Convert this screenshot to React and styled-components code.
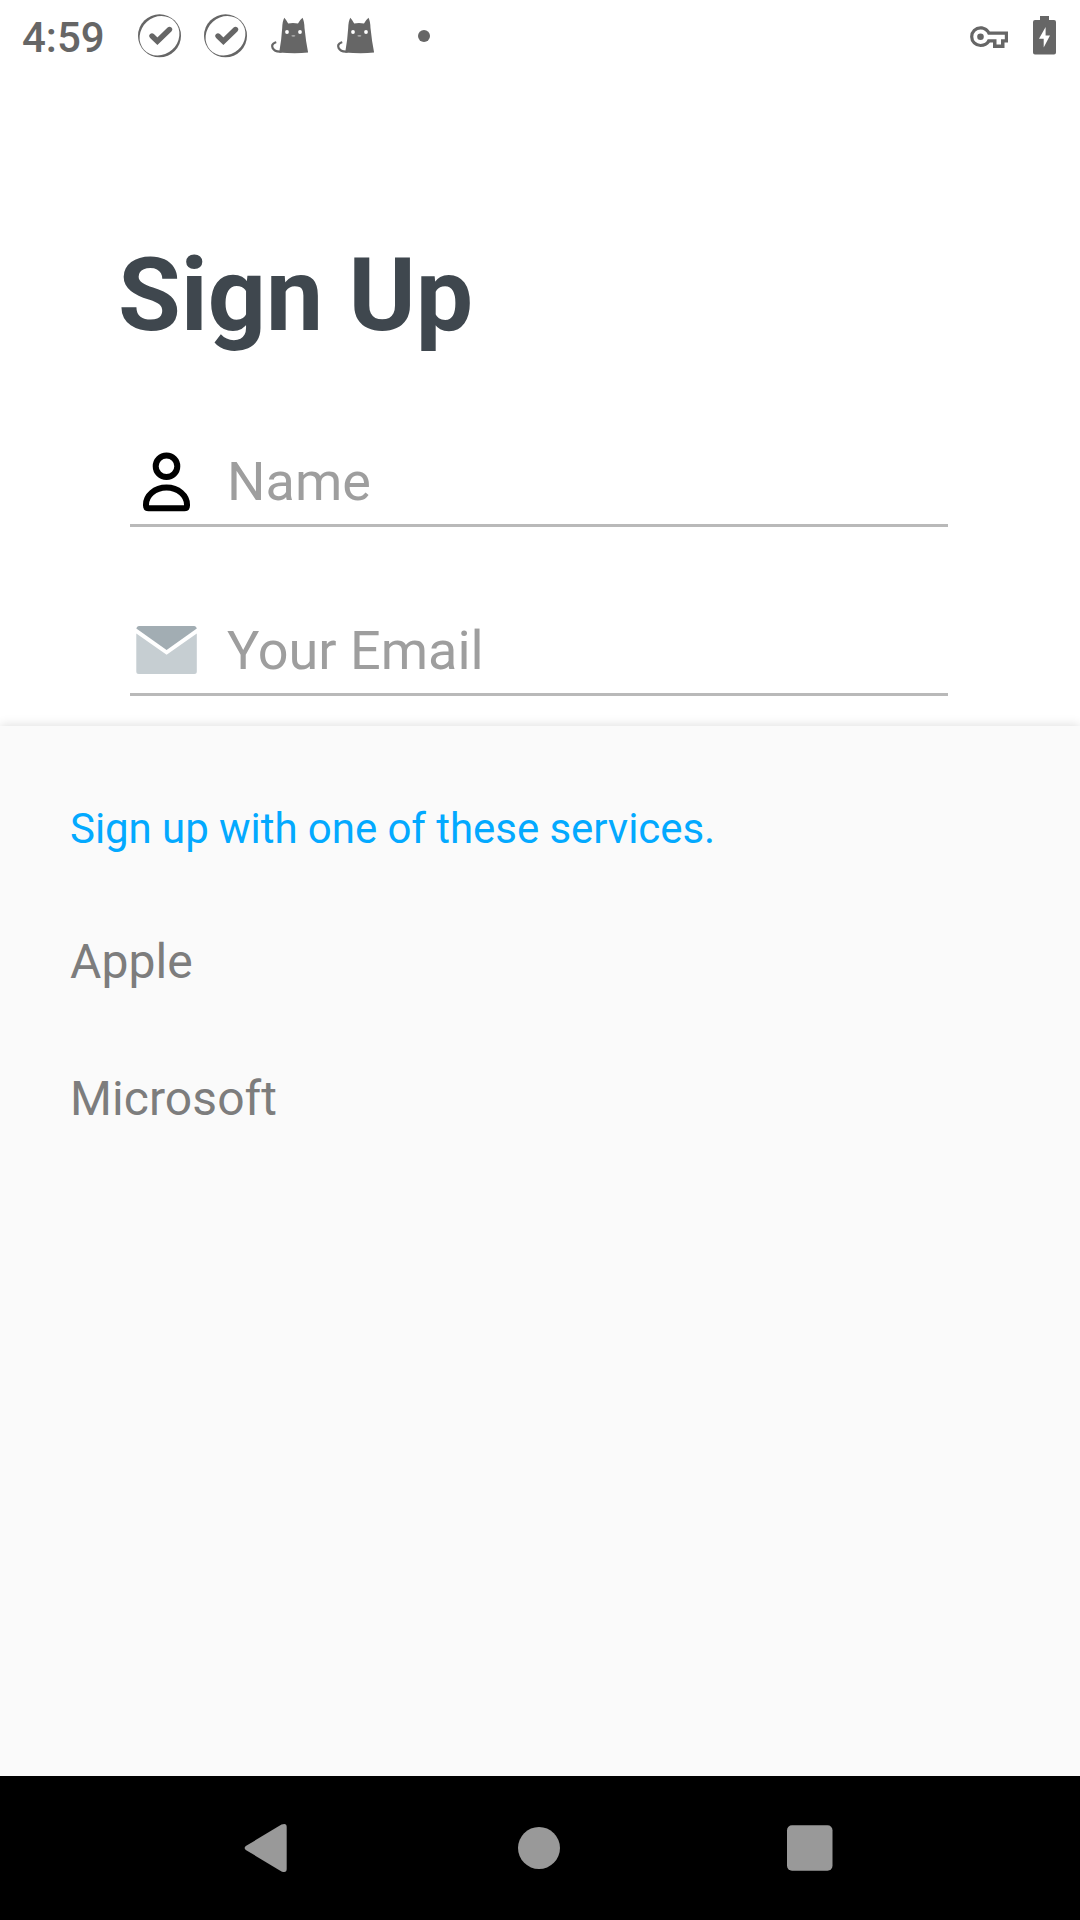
import React from "react";
import styled, { createGlobalStyle } from "styled-components";

const GlobalStyle = createGlobalStyle`
  *, *::before, *::after { box-sizing: border-box; }
  body { margin: 0; background: #fff; font-family: Roboto, "Liberation Sans", sans-serif; }
`;

const Screen = styled.div`
  width: 1080px;
  height: 1920px;
  display: flex;
  flex-direction: column;
  overflow: hidden;
  background: #fff;
`;

const StatusBar = styled.header`
  flex: none;
  height: 72px;
  padding: 0 24px 0 22px;
  display: flex;
  align-items: center;
  justify-content: space-between;
  color: #666;
`;

const StatusGroup = styled.div`
  display: flex;
  align-items: center;
  gap: ${(p) => p.$gap || 0}px;
`;

const Clock = styled.span`
  width: 104px;
  font-size: 42px;
  font-weight: 500;
  line-height: 48px;
  padding-top: 3px;
`;

const Icon = styled.svg`
  display: block;
  flex: none;
  width: ${(p) => p.$w}px;
  height: ${(p) => p.$h}px;
`;

const Form = styled.main`
  flex: none;
  height: 654px;
  padding: 163px 132px 0 118px;
  display: flex;
  flex-direction: column;
`;

const Title = styled.h1`
  margin: 0;
  color: #3f474e;
  font-size: 102px;
  font-weight: 700;
  line-height: 120px;
`;

const Fields = styled.div`
  display: flex;
  flex-direction: column;
  gap: 82px;
  padding: 85px 0 0 12px;
`;

const Field = styled.label`
  height: 87px;
  display: flex;
  align-items: center;
  gap: 26px;
  padding-left: 5px;
  border-bottom: 3px solid #b9b9b9;
`;

const Input = styled.input`
  flex: 1;
  min-width: 0;
  height: 64px;
  padding: 0;
  border: 0;
  outline: 0;
  background: transparent;
  font: 400 54px/64px Roboto, "Liberation Sans", sans-serif;
  &::placeholder { color: #9e9e9e; opacity: 1; }
`;

const Sheet = styled.section`
  flex: 1;
  padding: 72px 70px 0;
  background: #fafafa;
  box-shadow: 0 -1px 10px rgba(0, 0, 0, 0.13);
`;

const SheetTitle = styled.h2`
  margin: 0 0 33px;
  color: #03a9ff;
  font-size: 42px;
  font-weight: 400;
  line-height: 62px;
  letter-spacing: -0.055px;
`;

const ServiceList = styled.ul`
  margin: 0;
  padding: 0;
  list-style: none;
`;

const Service = styled.li`
  height: 137px;
  display: flex;
  align-items: center;
  color: #7d7d7d;
  font-size: 48px;
  line-height: 56px;
  letter-spacing: 0.08px;
`;

const NavBar = styled.nav`
  flex: none;
  height: 144px;
  padding: 0 135px;
  display: flex;
  background: #000;
`;

const NavButton = styled.button`
  flex: 1;
  padding: 0;
  border: 0;
  background: transparent;
  display: flex;
  align-items: center;
  justify-content: center;
`;

const CheckBadge = () => (
  <Icon $w={66} $h={72} viewBox="0 0 66 72" fill="none">
    <circle cx="33.500" cy="35.800" r="21.500" fill="#666" />
    <ellipse cx="33.500" cy="35.800" rx="20.800" ry="18.800" transform="rotate(-42 33.500 35.800)" fill="#fff" />
    <path d="M26 36L31.400 41.300L43.500 29.500" stroke="#666" strokeWidth="5.400" strokeLinecap="round" strokeLinejoin="miter" />
  </Icon>
);

const Cat = () => (
  <Icon $w={66} $h={72} viewBox="-0.8 0 66 72" fill="none">
    <path
      fill="#666"
      d="M25.500 17.700Q27.600 20 29.400 23.400Q34 22.800 39.200 23.400Q41 20 43.700 17.700Q45.500 21 45.700 28Q47 41 49.300 52.500Q36 54 20.400 52.400Q22.700 40 23.400 28Q23.600 21 25.500 17.700z"
    />
    <path d="M22 51.500C13.500 52 10.500 44.500 16.500 42.500" stroke="#666" strokeWidth="2.300" strokeLinecap="round" />
    <circle cx="28.200" cy="32" r="1.900" fill="#fff" />
    <circle cx="41.200" cy="32" r="1.900" fill="#fff" />
    <ellipse cx="34.600" cy="35.800" rx="2" ry="0.900" fill="#aaa" />
  </Icon>
);

const MoreDot = () => (
  <Icon $w={66} $h={72} viewBox="0 0 66 72">
    <circle cx="34" cy="36" r="6" fill="#666" />
  </Icon>
);

const KeyIcon = () => (
  <Icon $w={38} $h={24} viewBox="0 -0.5 38 24">
    <path
      fill="#666"
      fillRule="evenodd"
      d="M10.500 1.800C14.800 1.800 18.200 4.200 19.900 7H38V18H34.500V23.500H23V18H19.900C18.200 20.600 14.800 22.600 10.500 22.600A10.400 10.400 0 0 1 10.500 1.800zM10.500 5A7.200 7.200 0 0 0 10.500 19.400C14 19.400 16.700 17.500 17.700 14.700H26.500V20H31V14.700H34.800V10.200H17.900C16.800 7 14 5 10.500 5z"
    />
    <circle cx="10.500" cy="12.200" r="3.300" fill="#666" />
  </Icon>
);

const BatteryIcon = () => (
  <Icon $w={23} $h={40} viewBox="0 0 23 40">
    <path fill="#666" d="M7 0H16V4H21Q23 4 23 6V36.500Q23 38.500 21 38.500H2Q0 38.500 0 36.500V6Q0 4 2 4H7z" />
    <path fill="#fff" d="M12.600 11L6 22.700H10.700V31.600L17 19.500H12.600z" />
  </Icon>
);

const PersonIcon = () => (
  <Icon $w={66} $h={66} viewBox="0 -0.5 66 66" fill="none" stroke="#000" strokeWidth="6">
    <circle cx="31.500" cy="16.800" r="10.800" />
    <path strokeLinejoin="round" d="M11 56C10.500 46 20 38 31.500 38C43 38 52.500 46 52 56Q52 58.700 49.500 58.700H13.500Q11 58.700 11 56z" />
  </Icon>
);

const MailIcon = () => (
  <Icon $w={66} $h={66} viewBox="-0.3 1 66 66">
    <path fill="#a2adb3" d="M3.500 9H59Q61 9 61.500 11.500L31.300 33L1 11.500Q1.500 9 3.500 9z" />
    <path fill="#c6ced2" d="M1 16.500L31.300 37.800L61.500 16.500V54.500Q61.500 57 59 57H3.500Q1 57 1 54.500z" />
  </Icon>
);

const fields = [
  { name: "name", placeholder: "Name", Glyph: PersonIcon },
  { name: "email", placeholder: "Your Email", Glyph: MailIcon },
];

const services = ["Apple", "Microsoft"];

export default function App() {
  return (
    <Screen>
      <GlobalStyle />
      <StatusBar>
        <StatusGroup>
          <Clock>4:59</Clock>
          <CheckBadge />
          <CheckBadge />
          <Cat />
          <Cat />
          <MoreDot />
        </StatusGroup>
        <StatusGroup $gap={25}>
          <KeyIcon />
          <BatteryIcon />
        </StatusGroup>
      </StatusBar>
      <Form>
        <Title>Sign Up</Title>
        <Fields>
          {fields.map(({ name, placeholder, Glyph }) => (
            <Field key={name}>
              <Glyph />
              <Input name={name} placeholder={placeholder} />
            </Field>
          ))}
        </Fields>
      </Form>
      <Sheet>
        <SheetTitle>Sign up with one of these services.</SheetTitle>
        <ServiceList>
          {services.map((service) => (
            <Service key={service}>{service}</Service>
          ))}
        </ServiceList>
      </Sheet>
      <NavBar>
        <NavButton aria-label="Back">
          <Icon $w={48} $h={48} viewBox="4 0 48 48" overflow="visible">
            <path fill="#999" d="M3.800 22L39.500 0.600Q44.700-1.500 44.700 3V45Q44.700 49.500 39.500 47.400L3.800 26Q1.500 24 3.800 22z" />
          </Icon>
        </NavButton>
        <NavButton aria-label="Home">
          <Icon $w={48} $h={48} viewBox="0 0 48 48">
            <circle cx="23" cy="24" r="21" fill="#999" />
          </Icon>
        </NavButton>
        <NavButton aria-label="Recents">
          <Icon $w={48} $h={48} viewBox="0 0 48 48">
            <rect x="1" y="1.300" width="45.500" height="45.500" rx="5" fill="#999" />
          </Icon>
        </NavButton>
      </NavBar>
    </Screen>
  );
}
